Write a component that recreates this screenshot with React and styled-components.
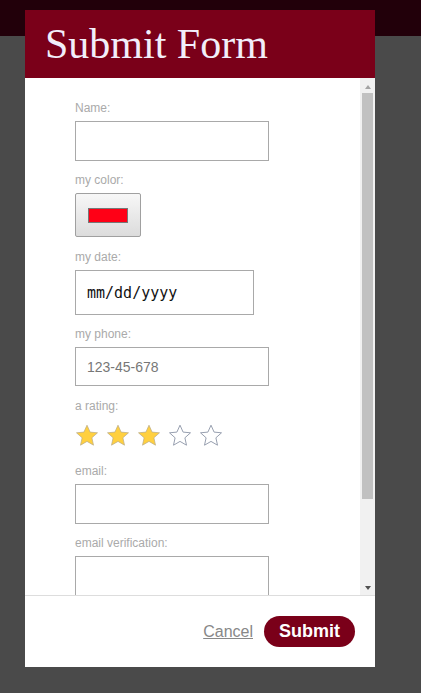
import React from "react";
import styled, { createGlobalStyle } from "styled-components";

const Global = createGlobalStyle`
  html, body { margin: 0; padding: 0; }
  body {
    background: #4a4a4a;
    font-family: "Liberation Sans", Arial, sans-serif;
    width: 421px;
    height: 693px;
    overflow: hidden;
  }
`;

const Page = styled.div`
  position: relative;
  width: 421px;
  height: 693px;
`;

const TopBar = styled.div`
  height: 36px;
  background: #22000a;
`;

const Modal = styled.div`
  position: absolute;
  top: 10px;
  left: 25px;
  width: 350px;
  height: 657px;
  background: #fff;
  display: flex;
  flex-direction: column;
`;

const Header = styled.div`
  height: 68px;
  flex: none;
  background: #7a0019;
  box-sizing: border-box;
  padding: 1px 20px 0;
`;

const Title = styled.h1`
  margin: 0;
  font-family: "Liberation Serif", "Times New Roman", serif;
  font-weight: normal;
  font-size: 42px;
  line-height: 66px;
  color: #f2eefa;
`;

const BodyWrap = styled.div`
  position: relative;
  flex: 1;
  min-height: 0;
`;

const Body = styled.div`
  height: 100%;
  box-sizing: border-box;
  overflow-y: auto;
  scrollbar-width: none;
  padding: 23px 15px 88px 50px;
  &::-webkit-scrollbar { display: none; }
`;

const ScrollBar = styled.div`
  position: absolute;
  top: 0;
  right: 0;
  bottom: 0;
  width: 15px;
  background: #f1f1f1;
  display: flex;
  flex-direction: column;
`;

const ScrollButton = styled.div`
  height: 15px;
  flex: none;
  display: flex;
  justify-content: center;
  align-items: flex-start;
  padding-top: ${(p) => (p.$down ? 6 : 7)}px;
  box-sizing: border-box;
`;

const Arrow = styled.span`
  width: 0;
  height: 0;
  border-left: 3.5px solid transparent;
  border-right: 3.5px solid transparent;
  ${(p) =>
    p.$down
      ? `border-top: 4px solid ${p.$color};`
      : `border-bottom: 4px solid ${p.$color};`}
`;

const Track = styled.div`
  flex: 1;
  padding: 0 2px;
`;

const Thumb = styled.div`
  height: 406px;
  background: #c1c1c1;
`;

const Field = styled.div`
  margin-bottom: ${(p) => p.$gap || 12}px;
`;

const Label = styled.label`
  display: block;
  font-size: 12px;
  line-height: 14px;
  color: #aaa;
  margin-bottom: 6px;
`;

const TextInput = styled.input`
  display: block;
  box-sizing: border-box;
  width: ${(p) => p.$w || 194}px;
  height: ${(p) => p.$h || 40}px;
  border: 1px solid #a9a9a9;
  border-radius: 0;
  padding: 0 11px;
  margin: 0;
  font-family: ${(p) => (p.$mono ? '"DejaVu Sans Mono", monospace' : '"Liberation Sans", Arial, sans-serif')};
  font-size: ${(p) => (p.$mono ? 15 : 14)}px;
  color: #222;
  background: #fff;
  outline: none;
  &::placeholder {
    color: ${(p) => (p.$mono ? "#111" : "#777")};
    opacity: 1;
  }
`;

const ColorButton = styled.button`
  display: flex;
  align-items: center;
  justify-content: center;
  box-sizing: border-box;
  width: 66px;
  height: 44px;
  padding: 0;
  border: 1px solid #a0a0a0;
  border-radius: 2px;
  background: linear-gradient(#f7f7f7, #dcdcdc);
`;

const Swatch = styled.span`
  display: block;
  box-sizing: border-box;
  width: 40px;
  height: 15px;
  background: ${(p) => p.$color};
  border: 1px solid #777;
`;

const Stars = styled.div`
  display: flex;
  gap: 7px;
  align-items: flex-start;
  padding: 5px 0 5px;
`;

const Footer = styled.div`
  flex: none;
  height: 72px;
  box-sizing: border-box;
  border-top: 1px solid #ddd;
  display: flex;
  align-items: center;
  justify-content: flex-end;
  gap: 11px;
  padding: 0 20px;
`;

const Cancel = styled.a`
  font-size: 16px;
  color: #888;
  text-decoration: underline;
  cursor: pointer;
`;

const Submit = styled.button`
  height: 31px;
  padding: 0 15px;
  border: none;
  border-radius: 16px;
  background: #7a0019;
  color: #fff;
  font-family: "Liberation Sans", Arial, sans-serif;
  font-weight: bold;
  font-size: 18px;
`;

const Star = ({ filled }) => (
  <svg width="24" height="23" viewBox="0 0 24 23">
    <path
      d="M12 1.2l3.1 6.9 7.4.7-5.6 5 1.6 7.4L12 17.4l-6.5 3.8 1.6-7.4-5.6-5 7.4-.7z"
      fill={filled ? "#ffd040" : "none"}
      stroke={filled ? "#b9ab86" : "#98a0b0"}
      strokeWidth={filled ? 0.7 : 1}
    />
  </svg>
);

export default function App() {
  return (
    <>
      <Global />
      <Page>
        <TopBar />
        <Modal>
          <Header>
            <Title>Submit Form</Title>
          </Header>
          <BodyWrap>
            <Body>
              <Field>
                <Label>Name:</Label>
                <TextInput type="text" />
              </Field>
              <Field $gap={13}>
                <Label>my color:</Label>
                <ColorButton type="button">
                  <Swatch $color="#ff0016" />
                </ColorButton>
              </Field>
              <Field>
                <Label>my date:</Label>
                <TextInput type="text" $w={179} $h={45} $mono placeholder="mm/dd/yyyy" />
              </Field>
              <Field $gap={13}>
                <Label>my phone:</Label>
                <TextInput type="text" $h={39} placeholder="123-45-678" />
              </Field>
              <Field>
                <Label>a rating:</Label>
                <Stars>
                  {[1, 2, 3, 4, 5].map((n) => (
                    <Star key={n} filled={n <= 3} />
                  ))}
                </Stars>
              </Field>
              <Field>
                <Label>email:</Label>
                <TextInput type="email" />
              </Field>
              <Field>
                <Label>email verification:</Label>
                <TextInput type="email" />
              </Field>
            </Body>
            <ScrollBar>
              <ScrollButton>
                <Arrow $color="#a3a3a3" />
              </ScrollButton>
              <Track>
                <Thumb />
              </Track>
              <ScrollButton $down>
                <Arrow $down $color="#505050" />
              </ScrollButton>
            </ScrollBar>
          </BodyWrap>
          <Footer>
            <Cancel>Cancel</Cancel>
            <Submit type="button">Submit</Submit>
          </Footer>
        </Modal>
      </Page>
    </>
  );
}
